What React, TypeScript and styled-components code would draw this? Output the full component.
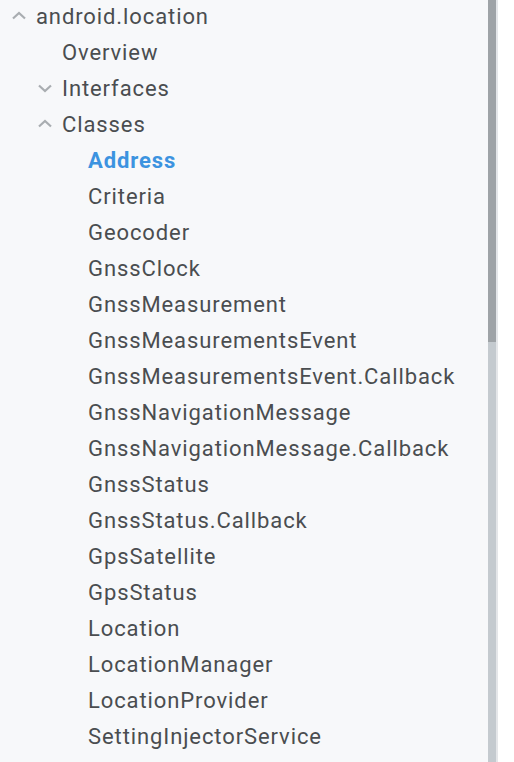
import React from "react";
import styled, { createGlobalStyle } from "styled-components";

const Global = createGlobalStyle`
  html, body { margin: 0; padding: 0; background: #ffffff; }
  body { font-family: Roboto, "Noto Sans", sans-serif; }
`;

const Page = styled.div`
  display: flex;
  width: 514px;
  height: 762px;
  overflow: hidden;
  background: #ffffff;
`;

const Panel = styled.nav`
  width: 488px;
  height: 762px;
  background: #f7f8fa;
  overflow: hidden;
`;

const Scroll = styled.div`
  width: 8px;
  height: 762px;
  background: #c4cacf;
  display: flex;
  flex-direction: column;
`;

const Thumb = styled.div`
  height: 342px;
  background: #9ea3a7;
`;

const Edge = styled.div`
  width: 2px;
  height: 762px;
  background: #e4e6e9;
`;

const List = styled.ul`
  list-style: none;
  margin: -2px 0 0;
  padding: 0;
`;

const Row = styled.li<{ $level: number; $active?: boolean }>`
  display: flex;
  align-items: center;
  height: 36px;
  padding-left: ${(p) => 10 + p.$level * 26}px;
  font-size: 22px;
  letter-spacing: 0.9px;
  color: ${(p) => (p.$active ? "#3c93e0" : "#4a4d50")};
  font-weight: ${(p) => (p.$active ? 700 : 400)};
  white-space: nowrap;
`;

const Toggle = styled.span`
  width: 26px;
  flex: none;
  display: flex;
  align-items: center;
`;

const Chevron = ({ up }: { up: boolean }) => (
  <svg width="16" height="16" viewBox="0 0 16 16" style={{ marginLeft: 1 }}>
    <path
      d={up ? "M2 10.5 L8 5 L14 10.5" : "M2 5.5 L8 11 L14 5.5"}
      fill="none"
      stroke="#a9adb1"
      strokeWidth="2.2"
    />
  </svg>
);

type Item = { label: string; level: number; toggle?: "up" | "down"; active?: boolean };

const items: Item[] = [
  { label: "android.location", level: 0, toggle: "up" },
  { label: "Overview", level: 1 },
  { label: "Interfaces", level: 1, toggle: "down" },
  { label: "Classes", level: 1, toggle: "up" },
  { label: "Address", level: 2, active: true },
  { label: "Criteria", level: 2 },
  { label: "Geocoder", level: 2 },
  { label: "GnssClock", level: 2 },
  { label: "GnssMeasurement", level: 2 },
  { label: "GnssMeasurementsEvent", level: 2 },
  { label: "GnssMeasurementsEvent.Callback", level: 2 },
  { label: "GnssNavigationMessage", level: 2 },
  { label: "GnssNavigationMessage.Callback", level: 2 },
  { label: "GnssStatus", level: 2 },
  { label: "GnssStatus.Callback", level: 2 },
  { label: "GpsSatellite", level: 2 },
  { label: "GpsStatus", level: 2 },
  { label: "Location", level: 2 },
  { label: "LocationManager", level: 2 },
  { label: "LocationProvider", level: 2 },
  { label: "SettingInjectorService", level: 2 },
];

export default function App() {
  return (
    <>
      <Global />
      <Page>
        <Panel>
          <List>
            {items.map((it) => (
              <Row key={it.label} $level={it.level} $active={it.active}>
                <Toggle>{it.toggle && <Chevron up={it.toggle === "up"} />}</Toggle>
                {it.label}
              </Row>
            ))}
          </List>
        </Panel>
        <Scroll>
          <Thumb />
        </Scroll>
        <Edge />
      </Page>
    </>
  );
}
